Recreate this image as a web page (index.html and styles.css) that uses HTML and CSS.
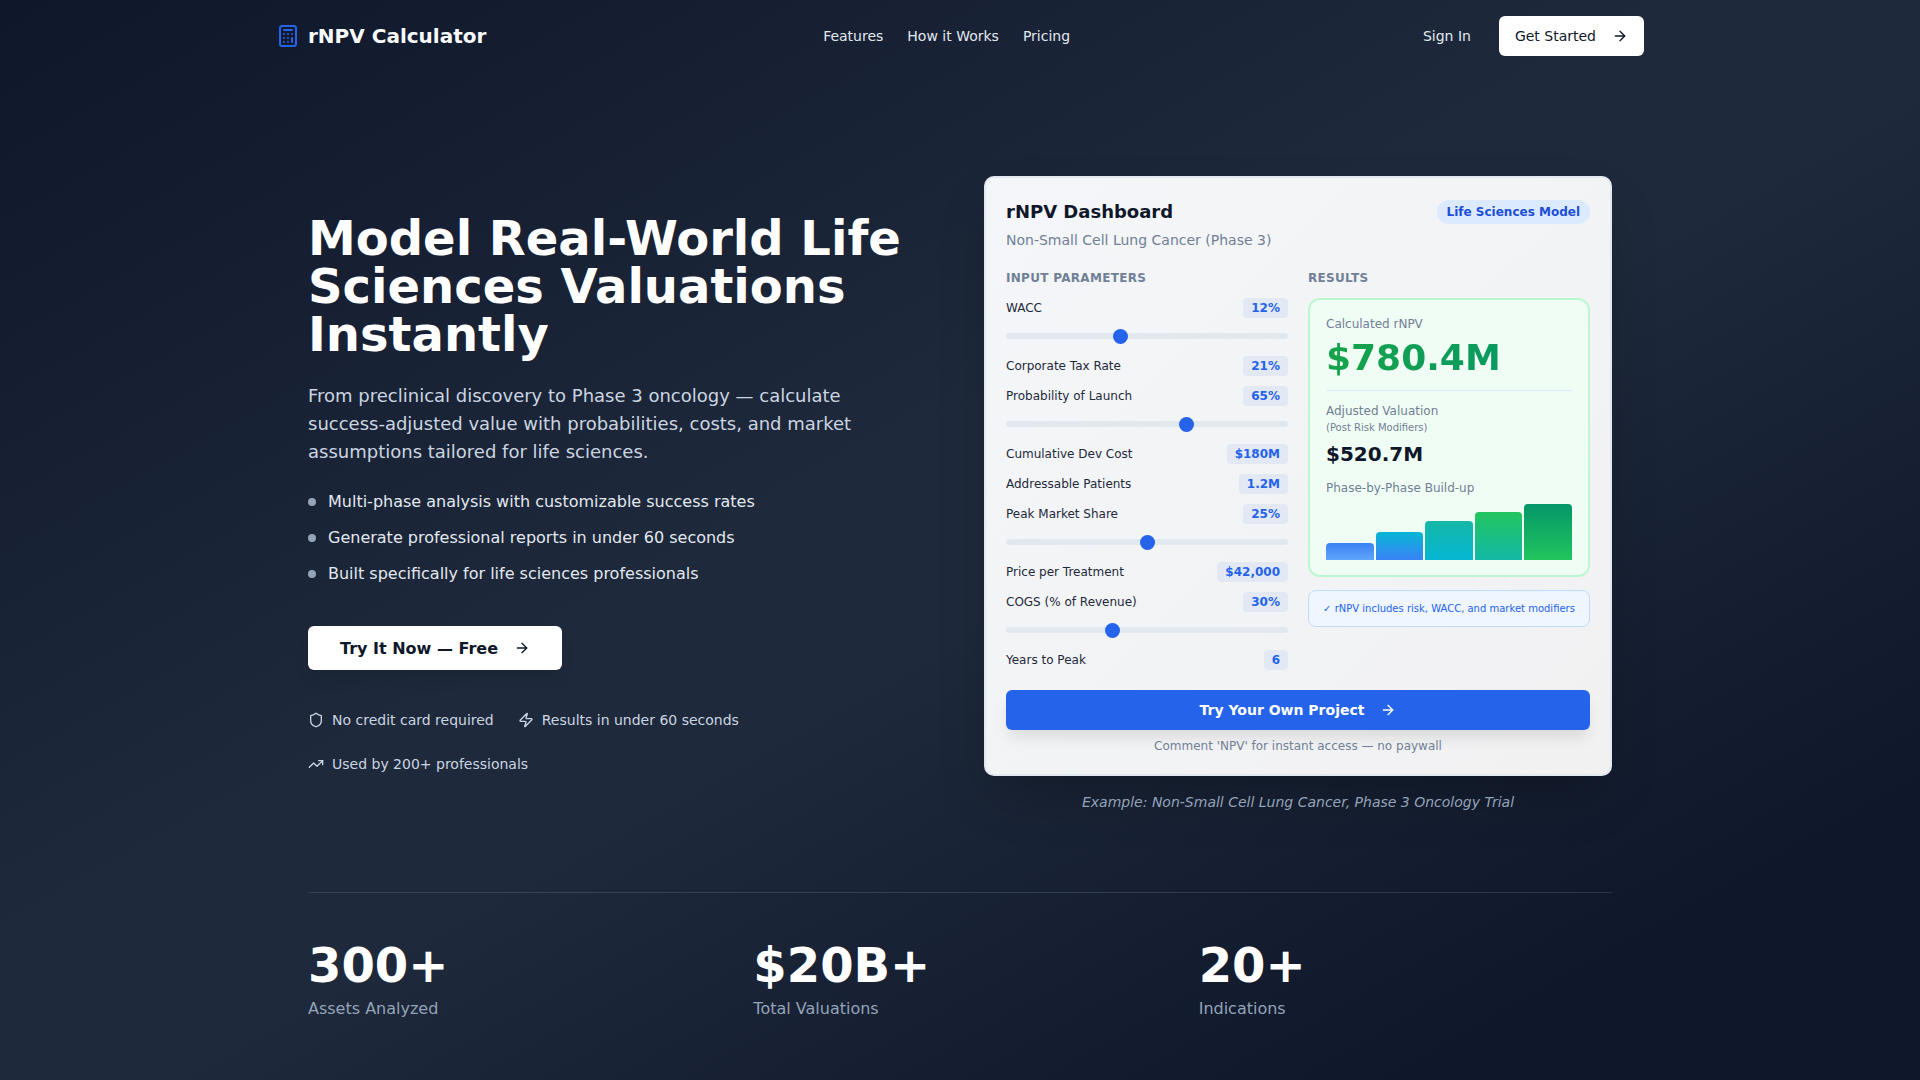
FILE: index.html
```html
<!DOCTYPE html>
<html lang="en">
<head>
<meta charset="utf-8">
<title>rNPV Calculator</title>
<link rel="stylesheet" href="styles.css">
</head>
<body>
<svg class="defs" width="0" height="0" aria-hidden="true">
  <symbol id="i-arrow" viewBox="0 0 24 24"><path d="M5 12h14"/><path d="m12 5 7 7-7 7"/></symbol>
</svg>
<div class="page">
  <header class="nav">
    <a class="logo">
      <svg class="icon logo-icon" viewBox="0 0 24 24"><rect x="4" y="2" width="16" height="20" rx="2"/><line x1="8" x2="16" y1="6" y2="6"/><line x1="16" x2="16" y1="14" y2="18"/><path d="M16 10h.01"/><path d="M12 10h.01"/><path d="M8 10h.01"/><path d="M12 14h.01"/><path d="M8 14h.01"/><path d="M12 18h.01"/><path d="M8 18h.01"/></svg>
      <span>rNPV Calculator</span>
    </a>
    <nav class="nav-links"><a>Features</a><a>How it Works</a><a>Pricing</a></nav>
    <div class="nav-actions">
      <a class="sign-in">Sign In</a>
      <a class="get-started">Get Started <svg class="icon icon-16"><use href="#i-arrow"/></svg></a>
    </div>
  </header>

  <main class="content">
    <section class="hero">
      <div class="hero-copy">
        <h1>Model Real-World Life Sciences Valuations Instantly</h1>
        <p class="lead">From preclinical discovery to Phase 3 oncology — calculate success-adjusted value with probabilities, costs, and market assumptions tailored for life sciences.</p>
        <ul class="bullets">
          <li>Multi-phase analysis with customizable success rates</li>
          <li>Generate professional reports in under 60 seconds</li>
          <li>Built specifically for life sciences professionals</li>
        </ul>
        <a class="try-btn">Try It Now — Free <svg class="icon icon-16"><use href="#i-arrow"/></svg></a>
        <div class="trust">
          <span><svg class="icon icon-16" viewBox="0 0 24 24"><path d="M20 13c0 5-3.5 7.5-7.66 8.95a1 1 0 0 1-.67-.01C7.5 20.5 4 18 4 13V6a1 1 0 0 1 1-1c2 0 4.5-1.2 6.24-2.72a1.17 1.17 0 0 1 1.52 0C14.51 3.81 17 5 19 5a1 1 0 0 1 1 1z"/></svg>No credit card required</span>
          <span><svg class="icon icon-16" viewBox="0 0 24 24"><path d="M4 14a1 1 0 0 1-.78-1.63l9.9-10.2a.5.5 0 0 1 .86.46l-1.92 6.02A1 1 0 0 0 13 10h7a1 1 0 0 1 .78 1.63l-9.9 10.2a.5.5 0 0 1-.86-.46l1.92-6.02A1 1 0 0 0 11 14z"/></svg>Results in under 60 seconds</span>
          <span><svg class="icon icon-16" viewBox="0 0 24 24"><polyline points="22 7 13.5 15.5 8.5 10.5 2 17"/><polyline points="16 7 22 7 22 13"/></svg>Used by 200+ professionals</span>
        </div>
      </div>

      <div class="hero-visual">
        <div class="card">
          <div class="card-head">
            <div>
              <h2>rNPV Dashboard</h2>
              <p class="card-sub">Non-Small Cell Lung Cancer (Phase 3)</p>
            </div>
            <span class="badge">Life Sciences Model</span>
          </div>
          <div class="card-grid">
            <div class="inputs">
              <h3>INPUT PARAMETERS</h3>
              <div class="param"><span>WACC</span><b>12%</b></div>
              <div class="slider"><i style="--v:.4"></i></div>
              <div class="param"><span>Corporate Tax Rate</span><b>21%</b></div>
              <div class="param"><span>Probability of Launch</span><b>65%</b></div>
              <div class="slider"><i style="--v:.647"></i></div>
              <div class="param"><span>Cumulative Dev Cost</span><b>$180M</b></div>
              <div class="param"><span>Addressable Patients</span><b>1.2M</b></div>
              <div class="param"><span>Peak Market Share</span><b>25%</b></div>
              <div class="slider"><i style="--v:.5"></i></div>
              <div class="param"><span>Price per Treatment</span><b>$42,000</b></div>
              <div class="param"><span>COGS (% of Revenue)</span><b>30%</b></div>
              <div class="slider"><i style="--v:.37"></i></div>
              <div class="param"><span>Years to Peak</span><b>6</b></div>
            </div>
            <div class="results">
              <h3>RESULTS</h3>
              <div class="result-box">
                <div class="r-label">Calculated rNPV</div>
                <div class="r-value">$780.4M</div>
                <div class="r-divider"></div>
                <div class="r-label">Adjusted Valuation</div>
                <div class="r-small">(Post Risk Modifiers)</div>
                <div class="r-adjusted">$520.7M</div>
                <div class="r-label r-build">Phase-by-Phase Build-up</div>
                <div class="bars">
                  <div class="bar b1"></div>
                  <div class="bar b2"></div>
                  <div class="bar b3"></div>
                  <div class="bar b4"></div>
                  <div class="bar b5"></div>
                </div>
              </div>
              <div class="note">✓ rNPV includes risk, WACC, and market modifiers</div>
            </div>
          </div>
          <a class="cta">Try Your Own Project <svg class="icon icon-16"><use href="#i-arrow"/></svg></a>
          <p class="cta-note">Comment 'NPV' for instant access — no paywall</p>
        </div>
        <p class="caption">Example: Non-Small Cell Lung Cancer, Phase 3 Oncology Trial</p>
      </div>
    </section>

    <section class="stats">
      <div><strong>300+</strong><span>Assets Analyzed</span></div>
      <div><strong>$20B+</strong><span>Total Valuations</span></div>
      <div><strong>20+</strong><span>Indications</span></div>
    </section>
  </main>
</div>
</body>
</html>
```

FILE: styles.css
```css
* { box-sizing: border-box; margin: 0; padding: 0; }
html, body { height: 100%; overflow: hidden; }
body {
  font-family: "DejaVu Sans", sans-serif;
  background: linear-gradient(to bottom right, #0f172a 0%, #1e293b 44%, #1e293b 54%, #0f172a 87%);
  color: #fff;
}
.defs { position: absolute; }
.icon { fill: none; stroke: currentColor; stroke-width: 2; stroke-linecap: round; stroke-linejoin: round; flex: none; }
.icon-16 { width: 16px; height: 16px; }

.page { width: 1400px; margin: 0 auto; }

.nav { display: flex; align-items: center; justify-content: space-between; margin: 0 16px; padding: 16px 0; }
.logo { display: flex; align-items: center; gap: 8px; font-size: 20px; font-weight: 700; color: #f8fafc; }
.logo-icon { width: 24px; height: 24px; color: #2563eb; }
.nav-links { display: flex; gap: 24px; font-size: 14px; color: #e2e8f0; }
.nav-actions { display: flex; align-items: center; gap: 12px; font-size: 14px; }
.sign-in { padding: 0 16px; color: #e2e8f0; }
.get-started { display: flex; align-items: center; gap: 16px; height: 40px; padding: 0 16px; background: #fff; color: #0f172a; border-radius: 6px; }

.content { padding: 0 48px; }
.hero { display: grid; grid-template-columns: 1fr 1fr; gap: 48px; align-items: center; padding-top: 104px; }

h1 { font-size: 48px; line-height: 48px; font-weight: 700; color: #fff; }
.lead { max-width: 576px; margin-top: 24px; font-size: 18px; line-height: 28px; color: #cbd5e1; }
.bullets { list-style: none; margin-top: 24px; display: flex; flex-direction: column; gap: 12px; font-size: 16px; line-height: 24px; color: #e2e8f0; }
.bullets li { display: flex; align-items: center; gap: 12px; }
.bullets li::before { content: ""; width: 8px; height: 8px; border-radius: 50%; background: #94a3b8; flex: none; }
.try-btn { display: flex; align-items: center; justify-content: center; gap: 16px; width: 254px; height: 44px; margin-top: 40px; background: #fff; color: #0f172a; border-radius: 6px; font-size: 16px; font-weight: 700; box-shadow: 0 10px 15px -3px rgba(0,0,0,.1); }
.trust { display: flex; flex-wrap: wrap; gap: 24px; margin-top: 40px; font-size: 14px; line-height: 20px; color: #cbd5e1; }
.trust span { display: flex; align-items: center; gap: 8px; }

.card { height: 600px; padding: 20px; border: 2px solid #e2e8f0; background: linear-gradient(135deg, #f4f6f9, #f1f1f2); border-radius: 10px; color: #0f172a; box-shadow: 0 25px 50px -12px rgba(0,0,0,.25); }
.card-head { display: flex; justify-content: space-between; align-items: flex-start; }
h2 { font-size: 18px; line-height: 28px; font-weight: 700; color: #0f172a; }
.card-sub { margin-top: 2px; font-size: 14px; line-height: 24px; color: #718096; }
.badge { margin-top: 2px; height: 24px; line-height: 24px; padding: 0 10px; border-radius: 12px; background: #dbeafe; color: #1d4ed8; font-size: 12px; font-weight: 700; }
.card-grid { display: grid; grid-template-columns: 282px 282px; gap: 20px; margin-top: 18px; }
h3 { font-size: 12px; line-height: 16px; font-weight: 700; letter-spacing: .3px; color: #718096; margin-bottom: 12px; }
.inputs { display: flex; flex-direction: column; gap: 10px; }
.inputs h3 { margin-bottom: 2px; }
.param { display: flex; justify-content: space-between; align-items: center; height: 20px; font-size: 12px; color: #1e293b; }
.param b { height: 20px; line-height: 20px; padding: 0 8px; border-radius: 4px; background: #e2e8f4; color: #2563eb; font-weight: 700; }
.slider { position: relative; height: 6px; margin: 5px 0 7px; border-radius: 3px; background: #e2e8f0; }
.slider i { position: absolute; top: -4.5px; left: calc(var(--v) * 267px); width: 15px; height: 15px; border-radius: 50%; background: #2563eb; }

.result-box { height: 279px; padding: 16px; border: 2px solid #bbf7d0; border-radius: 12px; background: #f0fdf4; }
.r-label { font-size: 12px; line-height: 16px; color: #718096; }
.r-value { font-size: 36px; line-height: 40px; font-weight: 700; margin-top: 6px; background: linear-gradient(90deg, #16a34a, #059669); -webkit-background-clip: text; background-clip: text; color: transparent; }
.r-divider { height: 1px; background: #dbeafe; margin: 12px 0; }
.r-small { margin-top: 2px; font-size: 10px; line-height: 14px; color: #718096; }
.r-adjusted { font-size: 20px; line-height: 28px; font-weight: 700; color: #0f172a; margin-top: 5px; }
.r-build { margin-top: 12px; }
.bars { display: flex; align-items: flex-end; gap: 2px; height: 56px; margin-top: 8px; }
.bar { flex: 1; border-radius: 4px 4px 0 0; }
.b1 { height: 17px; background: linear-gradient(#3b82f6, #60a5fa); }
.b2 { height: 28px; background: linear-gradient(#06b6d4, #3b82f6); }
.b3 { height: 39px; background: linear-gradient(#14b8a6, #06b6d4); }
.b4 { height: 48px; background: linear-gradient(#22c55e, #14b8a6); }
.b5 { height: 56px; background: linear-gradient(#059669, #22c55e); }
.note { margin-top: 13px; height: 37px; line-height: 35px; text-align: center; font-size: 10px; color: #2563eb; background: #eff6ff; border: 1px solid #bfdbfe; border-radius: 8px; white-space: nowrap; }

.cta { display: flex; align-items: center; justify-content: center; gap: 16px; height: 40px; margin-top: 20px; border-radius: 6px; background: #2563eb; color: #fff; font-size: 14px; font-weight: 700; box-shadow: 0 10px 15px -3px rgba(0,0,0,.1); }
.cta-note { margin-top: 8px; text-align: center; font-size: 12px; line-height: 16px; color: #718096; }
.caption { margin-top: 16px; text-align: center; font-size: 14px; line-height: 20px; font-style: italic; color: #94a3b8; }

.stats { display: grid; grid-template-columns: repeat(3, 1fr); gap: 32px; margin-top: 80px; padding-top: 48px; border-top: 1px solid rgba(148,163,184,.2); }
.stats strong { display: block; font-size: 48px; line-height: 48px; font-weight: 700; color: #fff; }
.stats span { display: block; margin-top: 8px; font-size: 16px; line-height: 24px; color: #94a3b8; }
```
